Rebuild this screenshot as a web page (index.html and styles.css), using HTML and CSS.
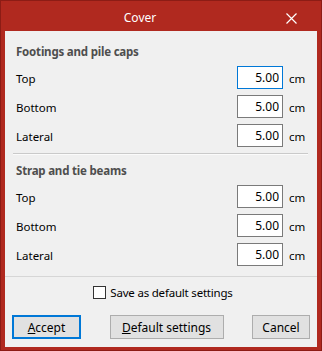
FILE: index.html
```html
<!DOCTYPE html>
<html lang="en">
<head>
    <meta charset="UTF-8">
    <title>Cover</title>
    <link rel="stylesheet" href="styles.css">
</head>
<body>
    <div class="window">
        <div class="titlebar">
            <span class="title">Cover</span>
            <span class="close">
                <svg width="11" height="11" viewBox="0 0 11 11">
                    <path d="M0.5 0.5 L10.5 10.5 M10.5 0.5 L0.5 10.5" stroke="#fff" stroke-width="1.2" fill="none"/>
                </svg>
            </span>
        </div>

        <div class="content">
            <div class="section">
                <div class="section-title">Footings and pile caps</div>
                <div class="rows">
                    <div class="row">
                        <span class="label">Top</span>
                        <input class="value focused" type="text" value="5.00">
                        <span class="unit">cm</span>
                    </div>
                    <div class="row">
                        <span class="label">Bottom</span>
                        <input class="value" type="text" value="5.00">
                        <span class="unit">cm</span>
                    </div>
                    <div class="row">
                        <span class="label">Lateral</span>
                        <input class="value" type="text" value="5.00">
                        <span class="unit">cm</span>
                    </div>
                </div>
            </div>

            <div class="separator"></div>

            <div class="section second">
                <div class="section-title">Strap and tie beams</div>
                <div class="rows">
                    <div class="row">
                        <span class="label">Top</span>
                        <input class="value" type="text" value="5.00">
                        <span class="unit">cm</span>
                    </div>
                    <div class="row">
                        <span class="label">Bottom</span>
                        <input class="value" type="text" value="5.00">
                        <span class="unit">cm</span>
                    </div>
                    <div class="row">
                        <span class="label">Lateral</span>
                        <input class="value" type="text" value="5.00">
                        <span class="unit">cm</span>
                    </div>
                </div>
            </div>

            <div class="footer">
                <label class="save-default">
                    <span class="checkbox"></span>
                    Save as default settings
                </label>
                <div class="buttons">
                    <button class="btn btn-accept"><u>A</u>ccept</button>
                    <button class="btn btn-default"><u>D</u>efault settings</button>
                    <button class="btn btn-cancel">Cancel</button>
                </div>
            </div>
        </div>
    </div>
</body>
</html>
```

FILE: styles.css
```css
* {
    margin: 0;
    padding: 0;
    box-sizing: border-box;
}

body {
    font-family: "Noto Sans", "DejaVu Sans", sans-serif;
    font-size: 11.5px;
    color: #000;
    background: #fff;
}

.window {
    width: 322px;
    height: 351px;
    background: #b0291f;
    border: 1px solid #8c1c15;
    padding: 0 4px 3px 4px;
    display: flex;
    flex-direction: column;
}

.titlebar {
    height: 30px;
    position: relative;
    display: flex;
    align-items: center;
    color: #fff;
}

.title {
    width: 270px;
    text-align: center;
    font-size: 12px;
    padding-top: 2px;
}

.close {
    position: absolute;
    right: 20px;
    top: 12px;
    width: 11px;
    height: 11px;
    display: flex;
}

.content {
    flex: 1;
    background: #f0f0f0;
    display: flex;
    flex-direction: column;
}

.section {
    padding: 13px 0 0 11px;
}

.section.second {
    padding-top: 8px;
}

.section-title {
    font-weight: bold;
    color: #4e4e4e;
    height: 16px;
    line-height: 16px;
    letter-spacing: -0.2px;
}

.rows {
    margin-top: 6px;
    display: flex;
    flex-direction: column;
    gap: 6px;
}

.row {
    display: flex;
    align-items: center;
    height: 23px;
}

.label {
    flex: 1;
    padding-top: 2px;
}

.value {
    width: 46px;
    height: 23px;
    border: 1px solid #7a7a7a;
    background: #fff;
    font-family: inherit;
    font-size: 12px;
    text-align: right;
    padding: 0 3px 1px 0;
    outline: none;
}

.value.focused {
    border-color: #0078d7;
}

.unit {
    width: 34px;
    padding-left: 6px;
    padding-top: 2px;
}

.separator {
    margin: 6px 9px 0 8px;
    height: 2px;
    border-top: 1px solid #cacaca;
    border-bottom: 1px solid #fbfbfb;
}

.footer {
    margin-top: 10px;
    border-top: 1px solid #d6d6d6;
    flex: 1;
    display: flex;
    flex-direction: column;
}

.save-default {
    display: flex;
    align-items: center;
    justify-content: center;
    gap: 4px;
    margin-top: 9px;
    height: 13px;
    padding-left: 4px;
    letter-spacing: -0.2px;
}

.checkbox {
    width: 13px;
    height: 13px;
    border: 1px solid #333;
    background: #fff;
}

.buttons {
    display: flex;
    justify-content: space-between;
    padding: 0 7px;
    margin-top: 16px;
}

.btn {
    height: 24px;
    background: #e1e1e1;
    border: 1px solid #adadad;
    font-family: inherit;
    font-size: 12px;
    color: #000;
}

.btn-accept {
    width: 69px;
    border: 2px solid #0078d7;
}

.btn-default {
    width: 114px;
}

.btn-cancel {
    width: 58px;
}
```
